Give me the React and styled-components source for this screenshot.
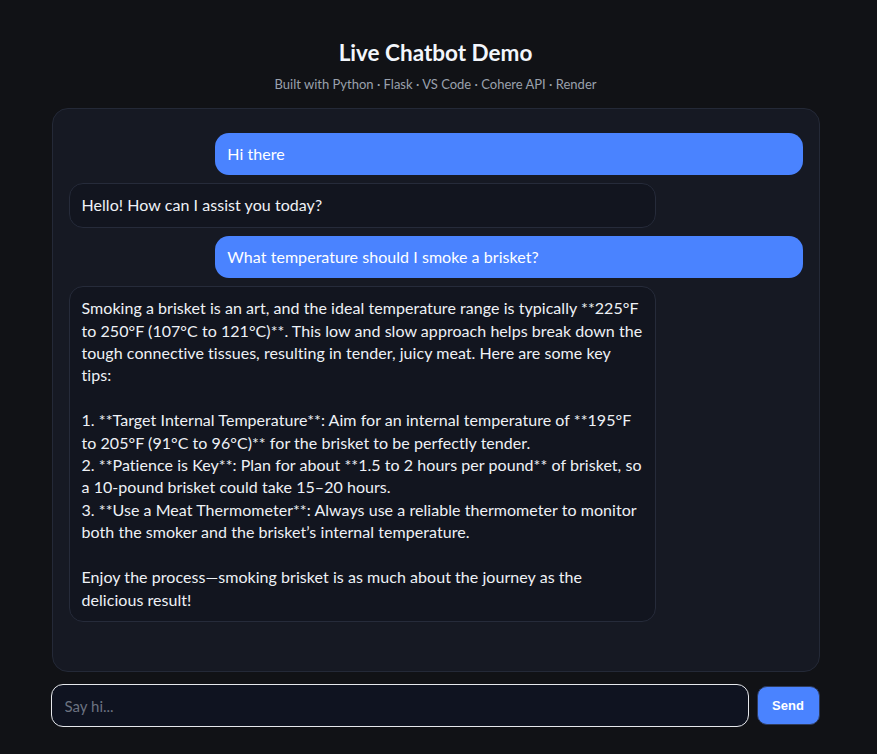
import React, { useState } from "react";
import styled, { createGlobalStyle } from "styled-components";

const GlobalStyle = createGlobalStyle`
  html, body {
    margin: 0;
    padding: 0;
    background: #111216;
  }
  body {
    font-family: Lato, "Open Sans", "Noto Sans", sans-serif;
    color: #e8ebf2;
  }
  * {
    box-sizing: border-box;
  }
`;

const Page = styled.div`
  min-height: 754px;
  padding: 38px 6px 0 0;
`;

const Wrapper = styled.div`
  width: 768px;
  margin: 0 auto;
`;

const Header = styled.header`
  text-align: center;
  margin-bottom: 15px;
`;

const Title = styled.h1`
  margin: 0;
  font-size: 22.5px;
  line-height: 29px;
  font-weight: 700;
  color: #f3f6fc;
`;

const Subtitle = styled.p`
  margin: 8px 0 0;
  font-size: 13px;
  line-height: 18px;
  color: #9aa1ad;
`;

const ChatPanel = styled.div`
  height: 564px;
  overflow-y: auto;
  display: flex;
  flex-direction: column;
  gap: 8px;
  padding: 24px 16px 16px;
  background: #161923;
  border: 1px solid #242937;
  border-radius: 16px;
`;

const Bubble = styled.div`
  width: 80%;
  align-self: ${(p) => (p.$user ? "flex-end" : "flex-start")};
  padding: 10px 12px;
  font-size: 16px;
  line-height: 22.4px;
  letter-spacing: 0.05px;
  white-space: pre-wrap;
  border-radius: 14px;
  background: ${(p) => (p.$user ? "#4a83ff" : "#12151f")};
  border: ${(p) => (p.$user ? "none" : "1px solid #262b3a")};
  color: ${(p) => (p.$user ? "#ffffff" : "#eef1f6")};
`;

const InputRow = styled.form`
  display: flex;
  align-items: center;
  gap: 8px;
  margin-top: 12px;
`;

const ChatInput = styled.input`
  flex: 1;
  min-width: 0;
  height: 43px;
  margin-left: -1px;
  padding: 0 13px;
  font-family: inherit;
  font-size: 15px;
  color: #e8ebf2;
  caret-color: #e8ebf2;
  background: #0f1320;
  border: 1.5px solid #e6e8ec;
  border-radius: 12px;
  outline: none;

  &::placeholder {
    color: #6b7280;
  }
`;

const SendButton = styled.button`
  flex-shrink: 0;
  width: 63px;
  height: 39px;
  font-family: "Liberation Sans", Arial, sans-serif;
  font-size: 13px;
  font-weight: 700;
  color: #ffffff;
  background: #4a83ff;
  border: 1px solid #2e3b5c;
  border-radius: 10px;
  cursor: pointer;
`;

const answer = `Smoking a brisket is an art, and the ideal temperature range is typically **225°F to 250°F (107°C to 121°C)**. This low and slow approach helps break down the tough connective tissues, resulting in tender, juicy meat. Here are some key tips:

1. **Target Internal Temperature**: Aim for an internal temperature of **195°F to 205°F (91°C to 96°C)** for the brisket to be perfectly tender.
2. **Patience is Key**: Plan for about **1.5 to 2 hours per pound** of brisket, so a 10-pound brisket could take 15–20 hours.
3. **Use a Meat Thermometer**: Always use a reliable thermometer to monitor both the smoker and the brisket’s internal temperature.

Enjoy the process—smoking brisket is as much about the journey as the delicious result!`;

const initialMessages = [
  { role: "user", text: "Hi there" },
  { role: "bot", text: "Hello! How can I assist you today?" },
  { role: "user", text: "What temperature should I smoke a brisket?" },
  { role: "bot", text: answer },
];

const App = () => {
  const [messages] = useState(initialMessages);
  const [draft, setDraft] = useState("");

  return (
    <>
      <GlobalStyle />
      <Page>
        <Wrapper>
          <Header>
            <Title>Live Chatbot Demo</Title>
            <Subtitle>
              Built with Python · Flask · VS Code · Cohere API · Render
            </Subtitle>
          </Header>
          <ChatPanel>
            {messages.map((m, i) => (
              <Bubble key={i} $user={m.role === "user"}>
                {m.text}
              </Bubble>
            ))}
          </ChatPanel>
          <InputRow onSubmit={(e) => e.preventDefault()}>
            <ChatInput
              autoFocus
              placeholder="Say hi..."
              value={draft}
              onChange={(e) => setDraft(e.target.value)}
            />
            <SendButton type="submit">Send</SendButton>
          </InputRow>
        </Wrapper>
      </Page>
    </>
  );
};

export default App;
